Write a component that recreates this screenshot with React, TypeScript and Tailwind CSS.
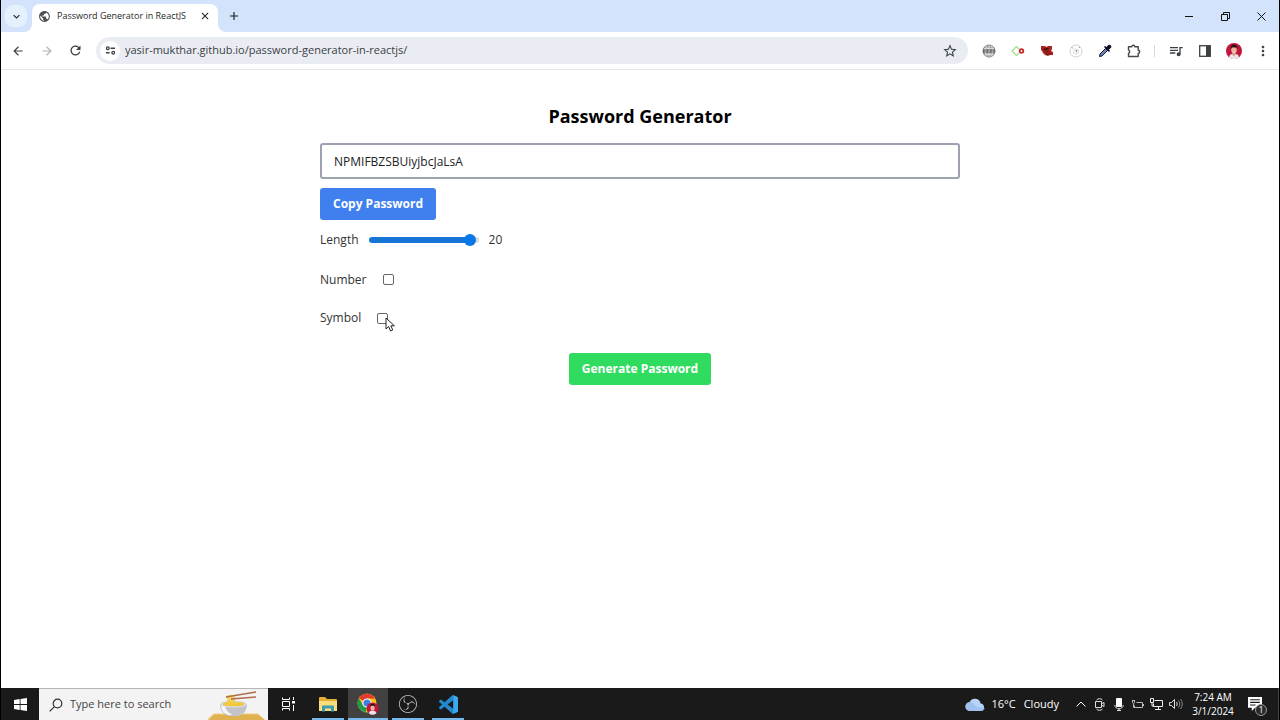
import { ReactNode, useState } from "react";
import {
  MdArrowBack,
  MdArrowForward,
  MdClose,
  MdAdd,
  MdKeyboardArrowDown,
  MdMoreVert,
  MdPublic,
  MdQueueMusic,
  MdRefresh,
  MdStarBorder,
} from "react-icons/md";
import { SiObsstudio } from "react-icons/si";

type IconButtonProps = {
  label: string;
  children: ReactNode;
  className?: string;
};

function IconButton({ label, children, className = "w-[29px]" }: IconButtonProps) {
  return (
    <button type="button" aria-label={label} className={`flex h-7 shrink-0 items-center justify-center ${className}`}>
      {children}
    </button>
  );
}

function TabStrip() {
  return (
    <div className="flex h-8 shrink-0 items-center bg-[#d3e3fb] text-[#1f1f1f]">
      <button
        type="button"
        aria-label="Search tabs"
        className="ml-1 flex size-[22px] items-center justify-center rounded-lg bg-[#e5f0ff]"
      >
        <MdKeyboardArrowDown size={13} />
      </button>
      <div className="relative ml-[5px] mt-1 flex h-7 w-[186px] items-center rounded-t-lg bg-white pl-[6px] pr-1">
        <svg className="absolute -left-2 bottom-0 size-2" viewBox="0 0 8 8" fill="#fff">
          <path d="M8 0v8H0a8 8 0 0 0 8-8z" />
        </svg>
        <svg className="absolute -right-2 bottom-0 size-2" viewBox="0 0 8 8" fill="#fff">
          <path d="M0 0v8h8a8 8 0 0 1-8-8z" />
        </svg>
        <MdPublic size={13} className="mb-1 shrink-0 text-[#4b4e52]" />
        <span className="mb-1 ml-[6px] flex-1 whitespace-nowrap text-[9px]">Password Generator in ReactJS</span>
        <button
          type="button"
          aria-label="Close tab"
          className="mb-1 flex size-[18px] shrink-0 items-center justify-center"
        >
          <MdClose size={12} />
        </button>
      </div>
      <button type="button" aria-label="New tab" className="ml-[7px] flex size-[18px] items-center justify-center">
        <MdAdd size={14} />
      </button>
      <div className="ml-auto flex">
        <IconButton label="Minimize" className="w-9">
          <svg width="9" height="9" viewBox="0 0 9 9" stroke="#111">
            <path d="M0 4.5h8" />
          </svg>
        </IconButton>
        <IconButton label="Restore" className="w-9">
          <svg width="9" height="9" viewBox="0 0 9 9" fill="none" stroke="#111">
            <path d="M.5 2.5h6v6h-6zM2.5 2.5v-2h6v6h-2" />
          </svg>
        </IconButton>
        <IconButton label="Close" className="w-9">
          <svg width="9" height="9" viewBox="0 0 9 9" stroke="#111">
            <path d="M.5.5l8 8M8.5.5l-8 8" />
          </svg>
        </IconButton>
      </div>
    </div>
  );
}

function Toolbar() {
  return (
    <div className="flex h-[38px] shrink-0 items-center border-b border-[#e4e6e9] bg-white px-[2px] text-[#3c4043]">
      <IconButton label="Back">
        <MdArrowBack size={14} />
      </IconButton>
      <IconButton label="Forward">
        <MdArrowForward size={14} className="text-[#b0b3b7]" />
      </IconButton>
      <IconButton label="Reload">
        <MdRefresh size={15} />
      </IconButton>
      <div className="ml-[6px] flex h-[27px] flex-1 items-center rounded-full bg-[#e9edf3] pl-1 pr-1">
        <button
          type="button"
          aria-label="View site information"
          className="flex size-5 items-center justify-center rounded-full bg-white"
        >
          <svg width="11" height="9" viewBox="0 0 12 10" fill="none" stroke="#3c4043" strokeWidth="1.4">
            <circle cx="3" cy="2.5" r="1.5" />
            <path d="M6 2.5h5M1 7.5h4" />
            <circle cx="9" cy="7.5" r="1.5" />
          </svg>
        </button>
        <input
          aria-label="Address"
          className="ml-[5px] min-w-0 flex-1 bg-transparent text-[11px] text-[#3c4043] outline-none"
          defaultValue="yasir-mukthar.github.io/password-generator-in-reactjs/"
        />
        <IconButton label="Bookmark this tab">
          <MdStarBorder size={16} />
        </IconButton>
      </div>
      <div className="ml-[6px] flex items-center">
        <IconButton label="Web extension">
          <svg width="14" height="14" viewBox="0 0 14 14" fill="none">
            <circle cx="7" cy="7" r="6" fill="#a7a7a7" stroke="#777" />
            <path
              d="M2 4.5h10M3 10.5h8M7 1v12M4.5 1.5c-1.5 3-1.5 8 0 11M9.5 1.5c1.5 3 1.5 8 0 11"
              stroke="#e5e5e5"
              strokeWidth=".8"
            />
            <path d="M1 7h12" stroke="#666" strokeWidth="3" />
            <path d="M2.5 7h2M6 7h2M9.5 7h2" stroke="#ddd" />
          </svg>
        </IconButton>
        <IconButton label="Diamond extension">
          <svg width="14" height="12" viewBox="0 0 14 12" fill="none">
            <path d="M5.5 1.5L1 6l4.5 4.5L8 8M5.5 1.5L8 4" stroke="#a5e08c" strokeWidth="1.3" />
            <circle cx="10.5" cy="6" r="1.8" stroke="#c62828" strokeWidth="1.8" />
          </svg>
        </IconButton>
        <IconButton label="Heart extension">
          <svg width="14" height="12" viewBox="0 0 14 12">
            <path d="M1 1h4l1.5 1L8 1h4v3l-1 2 2 1v3h-3l-2 1-3-1-2-2-1-2L1 5z" fill="#a82420" />
            <path d="M3 4l3 1 3-2M5 7l4-1M6 9l5-.5" stroke="#5a1010" strokeWidth=".8" />
          </svg>
        </IconButton>
        <IconButton label="Target extension">
          <svg width="14" height="14" viewBox="0 0 14 14" fill="none" stroke="#cfd1d3">
            <circle cx="7" cy="7" r="6" />
            <circle cx="7" cy="7.5" r="2.5" stroke="#dadada" />
            <circle cx="7.5" cy="7" r=".9" fill="#888" stroke="none" />
            <path d="M2.5 3L4 4.5M10 4l1-1" stroke="#999" />
          </svg>
        </IconButton>
        <IconButton label="Color picker">
          <svg width="14" height="14" viewBox="0 0 14 14">
            <path d="M1.5 12.5L2 10l5.500-5.500 2 2L4 12z" fill="#7181bd" stroke="#16172c" />
            <path d="M6 3l1-1 1.500 1L10 1.300a1.900 1.900 0 0 1 2.700 2.700L11 5.500 12 7l-1 1z" fill="#101126" />
          </svg>
        </IconButton>
        <IconButton label="Extensions">
          <svg
            width="14"
            height="14"
            viewBox="0 0 14 14"
            fill="none"
            stroke="#45494d"
            strokeWidth="1.4"
            strokeLinejoin="round"
          >
            <path d="M1.5 2.700h3.300a1.500 1.500 0 0 1 3 0h3.400v3.500a1.500 1.500 0 0 1 0 3v3.300H1.500V9.200a1.600 1.600 0 0 0 0-3.100z" />
          </svg>
        </IconButton>
        <span className="mx-[6px] h-3 w-px bg-[#d5dae1]" />
        <IconButton label="Media">
          <MdQueueMusic size={16} />
        </IconButton>
        <IconButton label="Side panel">
          <svg width="12" height="12" viewBox="0 0 12 12">
            <rect x=".7" y=".7" width="10.6" height="10.6" fill="none" stroke="#3c4043" strokeWidth="1.3" />
            <path d="M7 1h4v10H7z" fill="#3c4043" />
          </svg>
        </IconButton>
        <IconButton label="Profile">
          <Avatar />
        </IconButton>
        <IconButton label="Menu">
          <MdMoreVert size={16} />
        </IconButton>
      </div>
    </div>
  );
}

function Avatar() {
  return (
    <svg width="16" height="16" viewBox="0 0 16 16">
      <circle cx="8" cy="8" r="8" fill="#c4143c" />
      <path d="M3 14.2C3.5 11.5 5 11 8 11s4.5.5 5 3.2a8 8 0 0 1-10 0z" fill="#e9e4ea" />
      <path d="M6.5 9h3v3L8 13.2 6.5 12z" fill="#d69a80" />
      <ellipse cx="8" cy="6.8" rx="2.8" ry="3.7" fill="#e8b49b" />
      <path d="M4.8 6.5C4.3 3 6 1.6 8.2 1.6S11.700 3 11.200 6.500l-.9-2.100H5.800z" fill="#2b1418" />
      <path d="M6.5 8.800c.5 1 2.500 1 3 0z" fill="#fff" />
    </svg>
  );
}

function PasswordGenerator() {
  const [length, setLength] = useState(20);
  const [useNumber, setUseNumber] = useState(false);
  const [useSymbol, setUseSymbol] = useState(false);

  return (
    <main className="flex-1 overflow-hidden bg-white pt-8 text-[12px] text-[#333]">
      <div className="mx-auto max-w-[640px]">
        <h1 className="text-center text-[18px] font-bold leading-7 text-black">Password Generator</h1>
        <input
          type="text"
          aria-label="Password"
          readOnly
          value="NPMIFBZSBUiyjbcJaLsA"
          className="mt-[13px] h-9 w-full rounded-[3px] border-2 border-[#9ca3af] px-3 text-[#222] outline-none"
        />
        <button type="button" className="mt-[9px] h-8 rounded-[3px] bg-[#4080ee] px-[13px] font-bold text-white">
          Copy Password
        </button>
        <div className="flex h-10 items-center">
          <label htmlFor="length">Length</label>
          <input
            id="length"
            type="range"
            min={0}
            max={20.5}
            step={0.5}
            value={length}
            onChange={(e) => setLength(Number(e.target.value))}
            className="mx-[10px] h-3 w-[110px] appearance-none bg-transparent [&::-webkit-slider-runnable-track]:h-[6px] [&::-webkit-slider-runnable-track]:rounded-full [&::-webkit-slider-runnable-track]:bg-[linear-gradient(to_right,#1775d8_92%,#d6d9dd_92%)] [&::-webkit-slider-thumb]:-mt-[3px] [&::-webkit-slider-thumb]:size-3 [&::-webkit-slider-thumb]:appearance-none [&::-webkit-slider-thumb]:rounded-full [&::-webkit-slider-thumb]:bg-[#0878e8]"
          />
          <span>{length}</span>
        </div>
        <div className="flex h-[39px] items-center">
          <label htmlFor="number">Number</label>
          <CheckBox id="number" checked={useNumber} onChange={setUseNumber} />
        </div>
        <div className="flex h-[38px] items-center">
          <label htmlFor="symbol">Symbol</label>
          <span className="relative flex">
            <CheckBox id="symbol" checked={useSymbol} onChange={setUseSymbol} />
            <svg className="pointer-events-none absolute left-6 top-1" width="11" height="15" viewBox="0 0 11 15">
              <path d="M1 1v11l2.700-2.500L5.500 14l2.200-1L5.900 8.800h3.500z" fill="#fff" stroke="#222" />
            </svg>
          </span>
        </div>
        <button
          type="button"
          className="mx-auto mt-4 block h-8 rounded-[3px] bg-[#30dc60] px-[13px] font-bold text-white"
        >
          Generate Password
        </button>
      </div>
    </main>
  );
}

type CheckBoxProps = {
  id: string;
  checked: boolean;
  onChange: (checked: boolean) => void;
};

function CheckBox({ id, checked, onChange }: CheckBoxProps) {
  return (
    <input
      id={id}
      type="checkbox"
      checked={checked}
      onChange={(e) => onChange(e.target.checked)}
      className="ml-4 size-[11px] appearance-none rounded-[2px] border border-[#666] bg-white checked:bg-[#0878e8]"
    />
  );
}

function TaskButton({ label, children, state }: { label: string; children: ReactNode; state?: "open" | "active" }) {
  return (
    <button
      type="button"
      aria-label={label}
      className={`relative flex h-8 w-10 items-center justify-center ${state === "active" ? "bg-[#414141]" : ""}`}
    >
      {children}
      {state && (
        <span className={`absolute bottom-0 h-[2px] bg-[#76b9ed] ${state === "active" ? "inset-x-0" : "inset-x-1"}`} />
      )}
    </button>
  );
}

function NoodleBowl() {
  return (
    <svg width="60" height="31" viewBox="0 0 60 31" className="self-end">
      <path d="M6 25h44l7 6H0z" fill="#dfb24f" />
      <path d="M0 30l6-5h44" fill="none" stroke="#efcc79" />
      <path d="M12 15h27c0 7-4 11-9 12h-9c-5-1-9-5-9-12z" fill="#c2c4ca" />
      <path d="M13 17c1 6 4 8 8 9h4c-5-2-7-5-8-9z" fill="#f6f6f7" />
      <ellipse cx="25.5" cy="15" rx="13.5" ry="3.5" fill="#dcdce0" />
      <ellipse cx="25.5" cy="15" rx="11" ry="2.3" fill="#eec441" />
      <path d="M20 8v8M22 8v9M24 8v8M26 9v7M19 14c4-3 8 3 12-1" fill="none" stroke="#f2ce45" strokeWidth="1.6" />
      <path d="M18 8c2-3 7-3 9 0s-7 3-9 0z" fill="#f7d95a" />
      <path d="M18 8L48 3M23 10l25-2" stroke="#ad6d4a" strokeWidth="1.4" />
    </svg>
  );
}

function ChromeLogo() {
  return (
    <svg width="22" height="22" viewBox="0 0 22 22">
      <circle cx="10" cy="10" r="9.5" fill="#fbc116" />
      <path d="M10 10L1.8 5.2A9.5 9.5 0 0 1 18.2 5.5H10z" fill="#e33b2e" />
      <path d="M1.8 5.2L6.2 12.5 10 14.3 8.5 19.4A9.5 9.5 0 0 1 1.8 5.2z" fill="#229a4b" />
      <circle cx="10" cy="10" r="4.6" fill="#fff" />
      <circle cx="10" cy="10" r="3.6" fill="#3f7de8" />
      <g transform="translate(9.5 9.5) scale(.76)">
        <circle cx="8" cy="8" r="8" fill="#c4143c" />
        <path d="M3 14.2C3.5 11.5 5 11 8 11s4.5.5 5 3.2a8 8 0 0 1-10 0z" fill="#e9e4ea" />
        <ellipse cx="8" cy="7" rx="2.8" ry="4" fill="#e8b49b" />
        <path d="M4.8 6.5C4.3 3 6 1.6 8.2 1.6S11.700 3 11.200 6.500l-.9-2.100H5.800z" fill="#2b1418" />
      </g>
    </svg>
  );
}

function Taskbar() {
  return (
    <footer className="flex h-8 shrink-0 items-center bg-[#1a1a1a] text-white">
      <button type="button" aria-label="Start" className="flex h-8 w-[38px] items-center justify-center">
        <svg width="13" height="13" viewBox="0 0 13 13" fill="#fff">
          <path d="M0 1.9l5.700-.8v5H0zM6.500 1L13 0v6.100H6.500zM0 6.900h5.700v5L0 11.100zM6.500 6.900H13V13l-6.500-1z" />
        </svg>
      </button>
      <div className="flex h-8 w-[229px] items-center border-t border-[#b5b5b5] bg-[#f3f3f3] pl-[10px]">
        <svg width="14" height="14" viewBox="0 0 14 14" fill="none" stroke="#333" strokeWidth="1.2">
          <circle cx="8.5" cy="5.5" r="4.3" />
          <path d="M5.4 8.6L.7 13.3" />
        </svg>
        <input
          aria-label="Search"
          placeholder="Type here to search"
          className="ml-[7px] min-w-0 flex-1 bg-transparent text-[11px] outline-none placeholder:text-[#444]"
        />
        <NoodleBowl />
      </div>
      <TaskButton label="Task view">
        <svg width="14" height="14" viewBox="0 0 14 14" fill="none" stroke="#fff">
          <path d="M1.5 4.5h7v5h-7zM1.5.5v2h7v-2M1.5 13.5v-2h7v2M12.500 0v3M12.500 8v6" />
          <path d="M11 4h3v2.500h-3z" fill="#fff" stroke="none" />
        </svg>
      </TaskButton>
      <TaskButton label="File Explorer" state="open">
        <svg width="18" height="15" viewBox="0 0 18 15">
          <path d="M0 1a1 1 0 0 1 1-1h5l2 2h9a1 1 0 0 1 1 1v11H0z" fill="#e5ae34" />
          <path d="M0 4h18v10H0z" fill="#f9dc7b" />
          <path d="M3 14.5v-5a1 1 0 0 1 1-1h10a1 1 0 0 1 1 1v5h-3v-3H6v3z" fill="#3d9bb0" />
        </svg>
      </TaskButton>
      <TaskButton label="Google Chrome" state="active">
        <ChromeLogo />
      </TaskButton>
      <TaskButton label="OBS Studio" state="open">
        <SiObsstudio size={18} className="text-[#c4c4c8]" />
      </TaskButton>
      <TaskButton label="Visual Studio Code" state="open">
        <svg width="19" height="19" viewBox="0 0 24 24" fill="#2489ca">
          <path d="M23.15 2.587L18.21.21a1.494 1.494 0 0 0-1.705.29l-9.46 8.63-4.12-3.128a.999.999 0 0 0-1.276.057L.327 7.261A1 1 0 0 0 .326 8.74L3.899 12 .326 15.26a1 1 0 0 0 .001 1.479L1.65 17.94a.999.999 0 0 0 1.276.057l4.12-3.128 9.46 8.63a1.492 1.492 0 0 0 1.704.29l4.942-2.377A1.5 1.5 0 0 0 24 20.06V3.939a1.5 1.5 0 0 0-.85-1.352zm-5.146 14.861L10.826 12l7.178-5.448v10.896z" />
          <path d="M18.2.2l4.950 2.387A1.500 1.500 0 0 1 24 3.939V20.060a1.500 1.500 0 0 1-.85 1.352L18.200 23.800z" fill="#3daaf0" />
        </svg>
      </TaskButton>

      <div className="ml-auto flex items-center">
        <button type="button" className="flex items-center text-[11px]">
          <svg width="20" height="13" viewBox="0 0 20 13">
            <path d="M5 13a4.500 4.500 0 0 1-.3-9A5.800 5.800 0 0 1 15.600 5.500 3.800 3.800 0 0 1 16 13z" fill="#b8d3f5" />
            <path d="M5 13a4.500 4.500 0 0 1 0-9c4 0 4 4 7 5l8 1a3.800 3.800 0 0 1-4 3z" fill="#90b5e8" opacity=".6" />
          </svg>
          <span className="ml-[6px] mr-2">16°C</span>
          <span>Cloudy</span>
        </button>
        <div className="ml-3 flex items-center">
          <IconButton label="Show hidden icons" className="w-[19px]">
            <svg width="10" height="6" viewBox="0 0 10 6" fill="none" stroke="#fff">
              <path d="M.5 5.5L5 1l4.500 4.500" />
            </svg>
          </IconButton>
          <IconButton label="Meet Now" className="w-[19px]">
            <svg width="10" height="13" viewBox="0 0 10 13" fill="none" stroke="#ddd">
              <path d="M1.5 2C3 .3 6 .3 7.500 2M1.500 11c1.500 1.700 4.500 1.700 6 0M.5 3.500h6v6h-6zM7 5.500l2-1v4l-2-1" />
            </svg>
          </IconButton>
          <IconButton label="Microphone" className="w-[19px]">
            <svg width="10" height="13" viewBox="0 0 10 13" fill="none">
              <rect x="2" y="0" width="6" height="9" rx="1" fill="#fff" />
              <path d="M.8 7c0 5 8.400 5 8.400 0M5 10.500V13M3 12.500h4" stroke="#ddd" />
            </svg>
          </IconButton>
          <IconButton label="Battery" className="w-[19px]">
            <svg width="14" height="11" viewBox="0 0 14 11" fill="none" stroke="#bbb">
              <path d="M5.500 3.500h6v5h-8v-2M12.500 5v2M1 1.500h3M1.500 1.500v2c0 1.300 2 1.300 2 0v-2M2.500 5v3.500h1" />
            </svg>
          </IconButton>
          <IconButton label="Network" className="w-[19px]">
            <svg width="14" height="12" viewBox="0 0 14 12" fill="none" stroke="#eee">
              <path d="M4.500 2.500h8v6h-9v-3M5 11.500h6M8.500 9v2M.5.500h3v4h-3zM2 4.500V8h1.500" />
            </svg>
          </IconButton>
          <IconButton label="Volume" className="w-[19px]">
            <svg width="14" height="12" viewBox="0 0 14 12" fill="none" stroke="#ddd">
              <path d="M.5 4.500h2l3-3v9l-3-3h-2zM7.500 4c.9 1.200.9 2.800 0 4" />
              <path d="M9.500 2.500c1.700 2 1.700 5 0 7M11.500 1c2.300 3 2.300 7 0 10" stroke="#888" />
            </svg>
          </IconButton>
        </div>
        <button type="button" className="w-14 text-center text-[10px] leading-[14px]">
          <span className="block">7:24 AM</span>
          <span className="block">3/1/2024</span>
        </button>
        <button
          type="button"
          aria-label="1 new notification"
          className="relative ml-[7px] mr-[10px] flex h-8 w-5 items-center"
        >
          <svg width="14" height="14" viewBox="0 0 13 13">
            <path d="M0 0h13v10H6.500l-3 3v-3H0z" fill="#fff" />
            <path d="M2 2.500h9M2 5h9M2 7.500h5" stroke="#1a1a1a" />
          </svg>
          <span className="absolute left-[7px] top-4 flex size-3 items-center justify-center rounded-full border border-[#999] bg-[#2b2b2b] text-[9px]">
            1
          </span>
        </button>
        <span className="h-8 w-px bg-[#444]" />
      </div>
    </footer>
  );
}

export default function App() {
  return (
    <div className="flex h-screen flex-col border-x border-black bg-white font-['Segoe_UI','Open_Sans',sans-serif]">
      <TabStrip />
      <Toolbar />
      <PasswordGenerator />
      <Taskbar />
    </div>
  );
}
